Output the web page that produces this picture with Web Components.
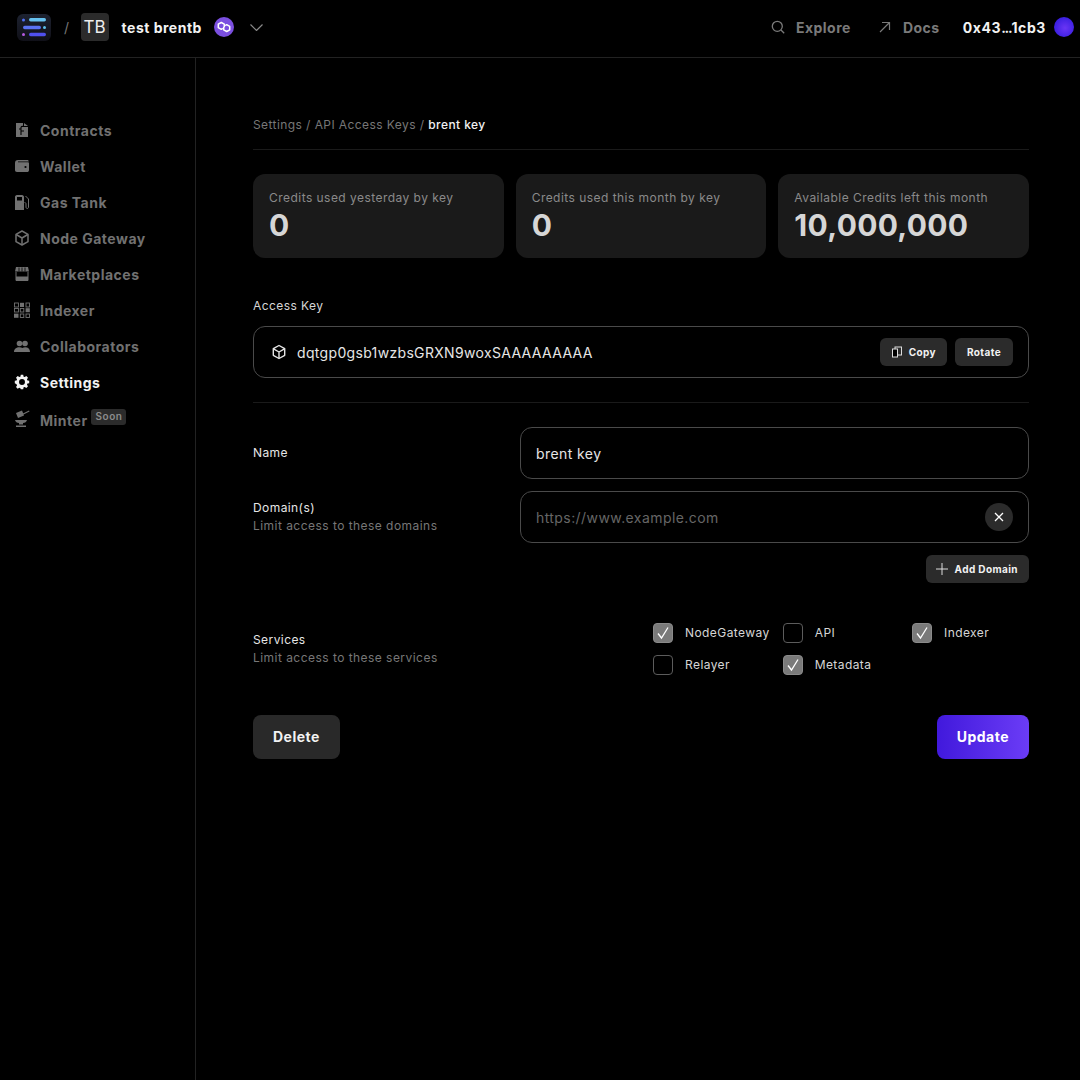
<!DOCTYPE html>
<html>
<head>
<meta charset="utf-8">
<title>API Access Keys</title>
<style>
  html, body { margin: 0; background: #000; }
  body { font-family: Inter, "Liberation Sans", sans-serif; color: #fff; }
</style>
</head>
<body>
<app-shell>
  <top-bar slot="top"></top-bar>
  <side-nav slot="side">
    <nav-item icon="contracts">Contracts</nav-item>
    <nav-item icon="wallet">Wallet</nav-item>
    <nav-item icon="gas">Gas Tank</nav-item>
    <nav-item icon="cube">Node Gateway</nav-item>
    <nav-item icon="market">Marketplaces</nav-item>
    <nav-item icon="indexer">Indexer</nav-item>
    <nav-item icon="people">Collaborators</nav-item>
    <nav-item icon="gear" active>Settings</nav-item>
    <nav-item icon="minter" badge="Soon">Minter</nav-item>
  </side-nav>
  <key-page></key-page>
</app-shell>

<script>
// Shared icon drawings, all on a 20x20 box
const ICONS = {
  contracts: `<path fill="currentColor" d="M4 3h7v4h5v10H4z"/><path fill="currentColor" d="M12 3l4 3h-4z"/><path fill="none" stroke="#000" stroke-width="1.100" d="M9 7v8M7 9h2M9 11h3M9 7c1-1 2-.6 2 0"/>`,
  wallet: `<path fill="currentColor" d="M3 7c0-2 1-3 3-3h9c1 0 1.600.500 1.800 1.400H6v.8h10.200C17 6.200 17 7 17 7.500V14c0 1.400-.8 2-2 2H5c-1.300 0-2-.8-2-2z"/><circle cx="13.500" cy="11" r="1.100" fill="#000"/>`,
  gas: `<path fill="currentColor" fill-rule="evenodd" d="M3 5c0-1 .7-2 2-2h5c1.200 0 2 1 2 2v13H3zM5 5v3.500h5V5z"/><path fill="none" stroke="currentColor" stroke-width="1" d="M13.500 4l3 3v8c0 2-2.500 2-2.500 0v-3c0-1-.5-1.500-1.500-1.500"/>`,
  cube: `<g fill="none" stroke="currentColor" stroke-width="1.500" stroke-linejoin="round"><path d="M10 3l6 3.300v7.400L10 17l-6-3.300V6.300z"/><path d="M4.200 6.500L10 10l5.800-3.500M10 10v7"/></g>`,
  market: `<path fill="currentColor" d="M4 3h12l1 4.500H3z"/><path fill="none" stroke="#000" stroke-width=".8" d="M7 3.500v4M10 3.500v4M13 3.500v4"/><path fill="none" stroke="currentColor" stroke-width="1" d="M4 8v8.500h12V8"/><path fill="currentColor" d="M4 12.500h12v4H4z"/>`,
  indexer: `<g fill="none" stroke="currentColor" stroke-width=".9"><rect x="2.500" y="3" width="4" height="4"/><rect x="14" y="3" width="3.500" height="4"/><rect x="2.500" y="8.500" width="4" height="3.500"/><rect x="8.300" y="8.500" width="3.500" height="3.500"/><rect x="8.300" y="14" width="3.500" height="3.500"/><rect x="14" y="14" width="3.500" height="3.500"/></g><g fill="currentColor"><rect x="8" y="2.800" width="4" height="4.200"/><rect x="13.600" y="8.200" width="4.200" height="4"/><rect x="2" y="13.600" width="4.500" height="4.200"/></g>`,
  people: `<g fill="currentColor"><circle cx="7.500" cy="7.500" r="2.800"/><circle cx="13" cy="7.500" r="2.800"/><path d="M2 16c0-3 2.200-4.700 5.500-4.700 1.200 0 2.100.3 2.900.7.800-.4 1.700-.7 2.800-.7 3 0 4.800 1.700 4.800 4.700z"/></g>`,
  gear: `<g transform="translate(10 10) scale(.8) translate(-10 -10)"><path fill="currentColor" fill-rule="evenodd" d="M8.500 2h3l.5 2.300 1.400.6 2-1.300 2.100 2.100-1.300 2 .6 1.400L19 9.500v3l-2.200.4-.6 1.400 1.300 2-2.100 2.100-2-1.300-1.400.6-.5 2.300h-3L8 18.700l-1.400-.6-2 1.300-2.100-2.100 1.300-2-.6-1.400L1 12.500v-3l2.200-.4.6-1.400-1.300-2 2.100-2.100 2 1.300 1.400-.6zM10 7.300a3.700 3.700 0 100 7.400 3.700 3.700 0 000-7.400z" transform="translate(0 -1)"/></g>`,
  minter: `<g fill="currentColor"><path d="M4 3l6-2.500 2 5-6 2.500z"/><path d="M10 4l7-3.500.5 1-7 3.500z"/><path d="M3 10h12c-.5 2-2 3-4 3v1.500H7V13c-2 0-3.500-1-4-3z"/><path d="M4 15.500h10V17H4z"/></g>`
};

function define(name, html, init) {
  customElements.define(name, class extends HTMLElement {
    constructor() {
      super();
      this.attachShadow({ mode: 'open' });
      this.shadowRoot.innerHTML = html;
      if (init) init(this, this.shadowRoot);
    }
  });
}

define('app-shell', `
  <style>
    :host { display: grid; grid-template-columns: 196px 1fr; grid-template-rows: 58px 1fr; height: 1080px; background: #000; }
    .top { grid-column: 1 / 3; }
    .side { border-right: 1px solid #222; }
    .main { min-width: 0; }
  </style>
  <div class="top"><slot name="top"></slot></div>
  <div class="side"><slot name="side"></slot></div>
  <div class="main"><slot></slot></div>
`);

define('top-bar', `
  <style>
    :host { display: flex; align-items: center; height: 57px; box-sizing: content-box; border-bottom: 1px solid #222; font-weight: 700; font-size: 14px; letter-spacing: .5px; }
    .bar { display: flex; align-items: center; flex: 1; height: 54px; padding: 0 6px 3px 16px; }
    .logo { width: 35px; height: 29px; }
    .slash { color: #777; font-weight: 400; margin: 0 11px 0 13px; font-size: 14px; }
    .tb { width: 28px; height: 28px; border-radius: 4px; background: #2b2b2b; color: #eee; font-weight: 400; font-size: 17px; letter-spacing: 0; display: flex; align-items: center; justify-content: center; margin-right: 13px; }
    .name { color: #f2f2f2; }
    .poly { margin-left: 12px; width: 20px; height: 20px; }
    .chev { margin-left: 16px; width: 13px; height: 7px; }
    .spacer { flex: 1; }
    .link { display: flex; align-items: center; color: #7a7a7a; }
    .link svg { width: 14px; height: 14px; margin-right: 11px; }
    .explore { margin-right: 27px; }
    .docs { margin-right: 23px; }
    .addr { color: #f2f2f2; margin-right: 8px; letter-spacing: .62px; }
    .dots { letter-spacing: -1.300px; }
    .orb { width: 20px; height: 20px; border-radius: 50%; background: radial-gradient(circle at 55% 55%, #6a35f5 0%, #3a1fe0 70%, #2f22d0 100%); }
  </style>
  <div class="bar">
    <svg class="logo" viewBox="0 0 35 29">
      <defs>
        <linearGradient id="lg" x1="0" y1="0" x2="0" y2="1"><stop offset="0" stop-color="#1d2230"/><stop offset="1" stop-color="#101018"/></linearGradient>
      </defs>
      <rect x="1" y="1" width="34" height="27" rx="6" fill="url(#lg)"/>
      <circle cx="7.500" cy="7" r="1.500" fill="#4f6ff5"/><rect x="13" y="5" width="17" height="3.500" rx="1.700" fill="#66c2f0"/>
      <rect x="7" y="12.800" width="18" height="3.500" rx="1.700" fill="#5a72f2"/><circle cx="28.500" cy="14.500" r="1.500" fill="#5cc0e8"/>
      <circle cx="7.500" cy="21.500" r="1.500" fill="#b45ae0"/><rect x="13" y="19.800" width="17" height="3.500" rx="1.700" fill="#5050ee"/>
    </svg>
    <span class="slash">/</span>
    <span class="tb">TB</span>
    <span class="name">test brentb</span>
    <svg class="poly" viewBox="0 0 20 20">
      <circle cx="10" cy="10" r="10" fill="#7b4fe0"/>
      <g fill="none" stroke="#fff" stroke-width="1.500" stroke-linejoin="round">
        <path d="M10.300 10.300V7.200L7.300 5.500l-3 1.700v3.400l3 1.700 1.500-.9"/>
        <path d="M9.700 9.700v3.100l3 1.700 3-1.700V9.400l-3-1.700-1.500.9"/>
      </g>
    </svg>
    <svg class="chev" viewBox="0 0 13 7"><path d="M.5.500l6 6 6-6" fill="none" stroke="#8a8a8a" stroke-width="1.200"/></svg>
    <span class="spacer"></span>
    <span class="link explore">
      <svg viewBox="0 0 14 14"><circle cx="6.300" cy="6.300" r="5" fill="none" stroke="#7a7a7a" stroke-width="1.300"/><path d="M10 10l3.200 3.200" stroke="#7a7a7a" stroke-width="1.300"/></svg>Explore
    </span>
    <span class="link docs">
      <svg viewBox="0 0 14 14"><path d="M2 12L11.500 2.500M4 2.500h7.500V10" fill="none" stroke="#7a7a7a" stroke-width="1.200"/></svg>Docs
    </span>
    <span class="addr">0x43<span class="dots">...</span>1cb3</span>
    <span class="orb"></span>
  </div>
`);

define('side-nav', `
  <style>
    :host { display: flex; flex-direction: column; gap: 12px; padding: 60px 0 0 12px; }
  </style>
  <slot></slot>
`);

define('nav-item', `
  <style>
    :host { display: flex; align-items: center; height: 24px; font-size: 14px; font-weight: 700; letter-spacing: .5px; color: #717171; }
    :host([active]) { color: #f2f2f2; }
    svg { width: 20px; height: 20px; margin-right: 8px; flex: none; overflow: visible; }
    .badge { display: none; margin: -6px 0 0 3px; padding: 0 4px 0 5px; height: 16px; line-height: 15px; border-radius: 3px; background: #2b2b2b; color: #8c8c8c; font-size: 10px; font-weight: 600; }
    .badge.on { display: block; }
    .label { display: block; }
  </style>
  <svg viewBox="0 0 20 20"></svg><span class="label"><slot></slot></span><span class="badge"></span>
`, (el, root) => {
  queueMicrotask(() => {
    root.querySelector('svg').innerHTML = ICONS[el.getAttribute('icon')] || '';
    const badge = el.getAttribute('badge');
    if (badge) {
      const b = root.querySelector('.badge');
      b.textContent = badge;
      b.classList.add('on');
      el.style.marginTop = '2px';
      el.style.marginBottom = '-2px';
    }
  });
});

define('stat-card', `
  <style>
    :host { display: block; height: 84px; box-sizing: border-box; padding: 16px; border-radius: 12px; background: #1a1a1a; }
    .label { font-size: 12px; line-height: 16px; letter-spacing: .46px; color: #8a8a8a; }
    .value { font-size: 30px; line-height: 36px; font-weight: 700; letter-spacing: .3px; color: #d6d6d6; margin-top: 1px; }
  </style>
  <div class="label"><slot name="label"></slot></div>
  <div class="value"><slot name="value"></slot></div>
`);

define('pill-button', `
  <style>
    :host { display: inline-flex; align-items: center; justify-content: center; box-sizing: border-box; height: 28px; padding: 0 12px; border-radius: 6px; background: #2b2b2b; color: #f2f2f2; font-size: 10px; font-weight: 700; letter-spacing: .4px; gap: 6px; }
    ::slotted(svg) { flex: none; }
  </style>
  <slot></slot>
`);

define('action-button', `
  <style>
    :host { display: inline-flex; align-items: center; justify-content: center; box-sizing: border-box; height: 44px; padding: 0 20px 1px; border-radius: 8px; background: #292929; color: #f2f2f2; font-size: 14px; font-weight: 700; letter-spacing: .5px; }
    :host([primary]) { background: linear-gradient(90deg, #4119dc, #6b3cf6); color: #fff; }
  </style>
  <slot></slot>
`);

define('text-box', `
  <style>
    :host { display: flex; align-items: center; box-sizing: border-box; height: 52px; padding: 0 15px; border: 1px solid #4a4a4a; border-radius: 12px; font-size: 14px; letter-spacing: .42px; color: #e6e6e6; }
    :host([placeholder]) { color: #666; }
    .grow { flex: 1; min-width: 0; }
    .end { display: flex; gap: 8px; align-items: center; }
  </style>
  <span class="grow"><slot></slot></span><span class="end"><slot name="end"></slot></span>
`);

define('form-row', `
  <style>
    :host { display: grid; grid-template-columns: 267px 1fr; align-items: center; }
    .title { font-size: 12px; line-height: 18px; letter-spacing: .42px; color: #e6e6e6; }
    .hint { font-size: 12px; line-height: 18px; letter-spacing: .46px; color: #777; }
  </style>
  <div><div class="title"><slot name="title"></slot></div><div class="hint"><slot name="hint"></slot></div></div>
  <div><slot></slot></div>
`);

define('check-item', `
  <style>
    :host { display: flex; align-items: center; height: 20px; font-size: 12px; letter-spacing: .42px; color: #d6d6d6; gap: 12px; }
    .box { width: 20px; height: 20px; box-sizing: border-box; border: 1px solid #5c5c5c; border-radius: 4px; flex: none; display: flex; align-items: center; justify-content: center; }
    :host([checked]) .box { background: #7a7a7a; border-color: #8a8a8a; }
    svg { display: none; width: 14px; height: 14px; }
    :host([checked]) svg { display: block; }
    .text { padding-bottom: 2px; }
  </style>
  <span class="box"><svg viewBox="0 0 14 14"><path d="M2 7.500l3.500 4.500L12 1.500" fill="none" stroke="#fff" stroke-width="1.300"/></svg></span>
  <span class="text"><slot></slot></span>
`);

define('key-page', `
  <style>
    :host { display: block; padding: 58px 51px 0 57px; }
    .crumbs { height: 33px; font-size: 12px; line-height: 18px; letter-spacing: .42px; color: #777; border-bottom: 1px solid #1a1a1a; margin-bottom: 24px; }
    .crumbs b { font-weight: 500; color: #f2f2f2; }
    .stats { display: grid; grid-template-columns: repeat(3, 1fr); gap: 12px; }
    .section-label { font-size: 12px; line-height: 18px; letter-spacing: .42px; color: #d6d6d6; margin: 39px 0 11px; }
    .rule { height: 1px; background: #1a1a1a; margin: 24px 0; }
    .stack { display: flex; flex-direction: column; gap: 12px; }
    .key { display: flex; align-items: center; gap: 10px; letter-spacing: .33px; }
    .key svg { width: 16px; height: 16px; flex: none; margin-left: 2px; }
    .add { display: flex; justify-content: flex-end; }
    .x { width: 28px; height: 28px; border-radius: 50%; background: #2b2b2b; display: flex; align-items: center; justify-content: center; }
    .services { margin-top: 40px; align-items: center; }
    .checks { display: grid; grid-template-columns: 129.700px 129.300px auto; row-gap: 12px; padding-left: 133px; }
    .actions { display: flex; justify-content: space-between; margin-top: 40px; }
  </style>
  <div class="crumbs">Settings / API Access Keys / <b>brent key</b></div>
  <div class="stats">
    <stat-card><span slot="label">Credits used yesterday by key</span><span slot="value">0</span></stat-card>
    <stat-card><span slot="label">Credits used this month by key</span><span slot="value">0</span></stat-card>
    <stat-card><span slot="label">Available Credits left this month</span><span slot="value">10,000,000</span></stat-card>
  </div>
  <div class="section-label">Access Key</div>
  <text-box>
    <span class="key">
      <svg viewBox="0 0 16 16"><g fill="none" stroke="#e6e6e6" stroke-width="1.400" stroke-linejoin="round"><path d="M8 1.500l5.700 3.200v6.600L8 14.500l-5.700-3.200V4.700z"/><path d="M2.500 4.900L8 8l5.500-3.100M8 8v6.300"/></g></svg>
      dqtgp0gsb1wzbsGRXN9woxSAAAAAAAAA
    </span>
    <pill-button slot="end" style="padding:0 11px;gap:6px"><svg width="12" height="12" viewBox="0 0 12 12"><rect x="4" y="1" width="6.500" height="8" fill="none" stroke="#ddd"/><rect x="1.500" y="3" width="5" height="8" fill="#000" stroke="#ddd"/></svg>Copy</pill-button>
    <pill-button slot="end">Rotate</pill-button>
  </text-box>
  <div class="rule"></div>
  <div class="stack">
    <form-row>
      <span slot="title">Name</span>
      <text-box>brent key</text-box>
    </form-row>
    <form-row>
      <span slot="title">Domain(s)</span>
      <span slot="hint">Limit access to these domains</span>
      <text-box placeholder>https://www.example.com<span class="x" slot="end"><svg width="10" height="10" viewBox="0 0 10 10"><path d="M1 1l8 8M9 1l-8 8" stroke="#fff" stroke-width="1.300"/></svg></span></text-box>
    </form-row>
    <div class="add"><pill-button style="padding:0 11px 0 10px;gap:7px"><svg width="12" height="12" viewBox="0 0 12 12"><path d="M6 0v12M0 6h12" stroke="#ddd" stroke-width="1"/></svg>Add Domain</pill-button></div>
  </div>
  <form-row class="services">
    <span slot="title">Services</span>
    <span slot="hint">Limit access to these services</span>
    <div class="checks">
      <check-item checked>NodeGateway</check-item>
      <check-item>API</check-item>
      <check-item checked>Indexer</check-item>
      <check-item>Relayer</check-item>
      <check-item checked>Metadata</check-item>
    </div>
  </form-row>
  <div class="actions">
    <action-button>Delete</action-button>
    <action-button primary>Update</action-button>
  </div>
`);
</script>
</body>
</html>
